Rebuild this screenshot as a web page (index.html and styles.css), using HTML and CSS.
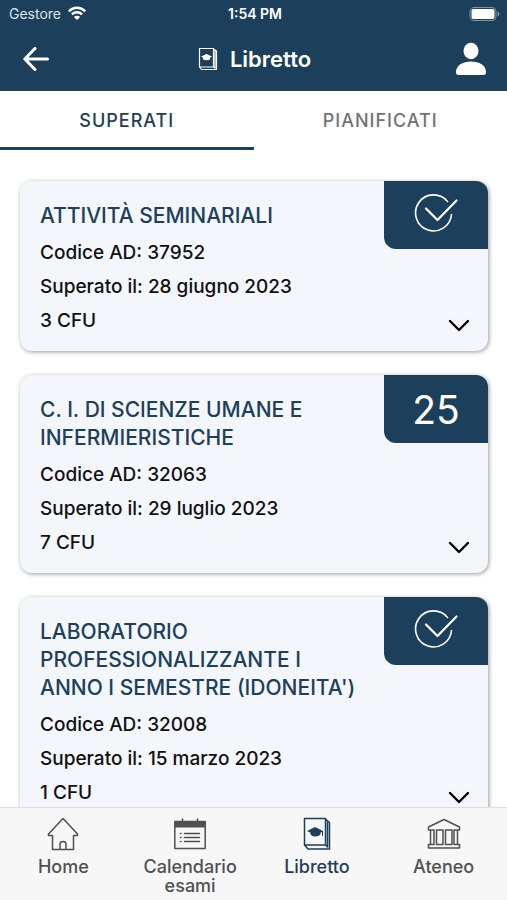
FILE: index.html
```html
<!DOCTYPE html>
<html lang="it">
<head>
<meta charset="utf-8">
<meta name="viewport" content="width=device-width, initial-scale=1">
<title>Libretto</title>
<link rel="stylesheet" href="styles.css">
</head>
<body>
<svg class="symbols" aria-hidden="true">
  <symbol id="check" viewBox="0 0 44 40">
    <path d="M33.5 8.5A18 18 0 1 0 37.5 21.500" stroke-width="1.6"/>
    <path d="M12 15.500L23.500 27L42.500 7.500" stroke-width="2.200"/>
  </symbol>
  <symbol id="chevron" viewBox="0 0 22 14">
    <path d="M2 2L11 11L20 2"/>
  </symbol>
</svg>

<header class="header">
  <div class="status">
    <div class="carrier">Gestore
      <svg class="wifi" viewBox="0 0 20 15" aria-hidden="true">
        <path d="M1.800 5.300C6.500 .6 13.500 .6 18.200 5.300M4.900 8.300C7.800 5.500 12.200 5.500 15.100 8.300"/>
        <path class="solid" d="M10 14L6.900 10.900C8.700 9.200 11.300 9.200 13.100 10.900Z"/>
      </svg>
    </div>
    <div class="clock">1:54 PM</div>
    <svg class="battery" viewBox="0 0 32 16" aria-hidden="true">
      <rect class="shell" x="1" y="1.500" width="26" height="13" rx="4"/>
      <rect class="charge" x="2.500" y="3" width="23" height="10" rx="2"/>
      <path class="tip" d="M28.500 5.500C31 6.500 31 9.500 28.500 10.500Z"/>
    </svg>
  </div>
  <div class="toolbar">
    <button class="icon-button" type="button" aria-label="Indietro">
      <svg class="back" viewBox="0 0 26 24" aria-hidden="true"><path d="M12 1.500L1.800 12L12 22.500M2.500 12H24.500"/></svg>
    </button>
    <h1 class="heading">
      <svg class="heading-icon" viewBox="0 0 20 24" aria-hidden="true">
        <path d="M1.500 1.500H15.500V20H1.500ZM1.500 20L3.500 22.500H18.500V4L15.500 2M15.500 20L17 21V4"/>
        <path class="solid" d="M3 9.500L8.500 7L14 9.500L12 10.800V12.500C10 13.500 7 13.500 5 12.500V10.800Z"/>
      </svg>
      Libretto
    </h1>
    <button class="icon-button" type="button" aria-label="Profilo">
      <svg class="profile" viewBox="0 0 30 34" aria-hidden="true">
        <ellipse cx="15" cy="9" rx="7.500" ry="8.300"/>
        <path d="M0 30C0 23.500 7 19.500 15 19.500S30 23.500 30 30C30 32.200 29.200 33 27.500 33H2.500C.8 33 0 32.200 0 30Z"/>
      </svg>
    </button>
  </div>
</header>

<div class="tabs" role="tablist">
  <button class="tab selected" type="button" role="tab" aria-selected="true">SUPERATI</button>
  <button class="tab" type="button" role="tab" aria-selected="false">PIANIFICATI</button>
</div>

<main class="list">
  <article class="card">
    <div class="details">
      <h2 class="title">ATTIVITÀ SEMINARIALI</h2>
      <p class="row">Codice AD: 37952</p>
      <p class="row">Superato il: 28 giugno 2023</p>
      <p class="row">3 CFU</p>
    </div>
    <div class="side">
      <div class="grade"><svg class="check" role="img" aria-label="Idoneo"><use href="#check"/></svg></div>
      <button class="expand" type="button" aria-label="Espandi"><svg class="chevron" aria-hidden="true"><use href="#chevron"/></svg></button>
    </div>
  </article>
  <article class="card">
    <div class="details">
      <h2 class="title">C. I. DI SCIENZE UMANE E INFERMIERISTICHE</h2>
      <p class="row">Codice AD: 32063</p>
      <p class="row">Superato il: 29 luglio 2023</p>
      <p class="row">7 CFU</p>
    </div>
    <div class="side">
      <div class="grade">25</div>
      <button class="expand" type="button" aria-label="Espandi"><svg class="chevron" aria-hidden="true"><use href="#chevron"/></svg></button>
    </div>
  </article>
  <article class="card">
    <div class="details">
      <h2 class="title">LABORATORIO PROFESSIONALIZZANTE I ANNO I SEMESTRE (IDONEITA')</h2>
      <p class="row">Codice AD: 32008</p>
      <p class="row">Superato il: 15 marzo 2023</p>
      <p class="row">1 CFU</p>
    </div>
    <div class="side">
      <div class="grade"><svg class="check" role="img" aria-label="Idoneo"><use href="#check"/></svg></div>
      <button class="expand" type="button" aria-label="Espandi"><svg class="chevron" aria-hidden="true"><use href="#chevron"/></svg></button>
    </div>
  </article>
</main>

<nav class="nav">
  <a class="nav-item" href="#home">
    <svg class="nav-icon" viewBox="0 0 34 34" aria-hidden="true">
      <path d="M17 1.500L31.500 17V18.500H27.500V32.500H6.500V18.500H2.500V17ZM14 32V27C14 23.500 20 23.500 20 27V32"/>
    </svg>
    Home
  </a>
  <a class="nav-item" href="#calendario">
    <svg class="nav-icon" viewBox="0 0 34 34" aria-hidden="true">
      <path d="M1.800 4.500H32.200V31.500H1.800ZM9.500 2V5M24.500 2V5M11.500 16.500H26.500M11.500 20.500H26.500M11.500 24.500H26.500M7.500 16.500H8M7.500 20.500H8M7.500 24.500H8"/>
      <path class="solid" d="M1.500 4H32.500V10.500H1.500Z"/>
    </svg>
    Calendario esami
  </a>
  <a class="nav-item current" href="#libretto" aria-current="page">
    <svg class="nav-icon" viewBox="0 0 34 34" aria-hidden="true">
      <path d="M4.500 1.500H25.500V28H4.500ZM4.500 28L8 32H29.500V5.500L25.500 2M25.500 28L27.500 30V5"/>
      <path class="solid" d="M7 14L15 10L23 14V19H22V15L20.500 15.800V17.500C18 20 12.500 20 10.500 17.500V15.800Z"/>
    </svg>
    Libretto
  </a>
  <a class="nav-item" href="#ateneo">
    <svg class="nav-icon" viewBox="0 0 34 34" aria-hidden="true">
      <path d="M17 2.500L32.500 10V13H30.500V27.500H32.500V31H1.500V27.500H3.500V13H1.500V10ZM3.500 13H7V27.500H3.500M27 13H30.500M27 13V27.500H30.500M9.500 13H16V27.500H9.500ZM18.500 13H25V27.500H18.500Z"/>
    </svg>
    Ateneo
  </a>
</nav>
</body>
</html>
```

FILE: styles.css
```css
:root {
  --navy: #1c405b;
  --panel: #f3f6fa;
  --grey: #505050;
}

* {
  box-sizing: border-box;
}

body {
  display: flex;
  flex-direction: column;
  height: 100vh;
  margin: 0;
  overflow: hidden;
  background: #fff;
  color: #111;
  font-family: Inter, "Liberation Sans", sans-serif;
}

button {
  padding: 0;
  border: 0;
  background: none;
  color: inherit;
  font: inherit;
  cursor: pointer;
}

svg {
  flex: none;
  fill: none;
  stroke: currentColor;
  stroke-linecap: round;
  stroke-linejoin: round;
}

svg .solid {
  fill: currentColor;
  stroke: none;
}

.symbols {
  position: absolute;
  width: 0;
  height: 0;
}

.header {
  flex: none;
  background: var(--navy);
  color: #fff;
}

.status {
  display: grid;
  grid-template-columns: 1fr auto 1fr;
  align-items: center;
  height: 27px;
  padding: 0 6px 0 9px;
  font-size: 14px;
}

.carrier {
  display: flex;
  align-items: center;
  gap: 6px;
  color: #dde5eb;
}

.clock {
  font-weight: 600;
}

.wifi {
  width: 20px;
  height: 15px;
  stroke: #fff;
  stroke-width: 2.4;
  stroke-linecap: butt;
}

.wifi .solid {
  fill: #fff;
}

.battery {
  justify-self: end;
  width: 32px;
  height: 16px;
}

.shell {
  stroke: #8296a5;
}

.charge {
  fill: #fff;
  stroke: none;
}

.tip {
  fill: #8296a5;
  stroke: none;
}

.toolbar {
  display: grid;
  grid-template-columns: 1fr auto 1fr;
  align-items: center;
  height: 64px;
  padding: 0 21px 0 23px;
}

.icon-button {
  display: flex;
  justify-self: start;
}

.icon-button:last-child {
  justify-self: end;
}

.back {
  width: 26px;
  height: 24px;
  stroke-width: 3;
}

.profile {
  width: 30px;
  height: 34px;
  fill: #fff;
  stroke: none;
}

.heading {
  display: flex;
  align-items: center;
  gap: 12px;
  margin: 0;
  font-size: 22px;
  font-weight: 600;
  line-height: 24px;
}

.heading-icon {
  width: 20px;
  height: 24px;
  stroke-width: 1.2;
}

.tabs {
  display: flex;
  flex: none;
  height: 59px;
}

.tab {
  flex: 1;
  padding-top: 3px;
  border-bottom: 3px solid transparent;
  color: #737373;
  font-size: 18px;
  font-weight: 500;
  letter-spacing: 1px;
}

.tab.selected {
  border-color: var(--navy);
  color: var(--navy);
}

.list {
  display: flex;
  flex: 1;
  flex-direction: column;
  gap: 24px;
  min-height: 0;
  padding: 31px 19px 0 20px;
  overflow: hidden;
}

.card {
  display: flex;
  flex: none;
  border-radius: 12px;
  background: var(--panel);
  box-shadow: 1px 1px 4px rgba(0, 0, 0, 0.4);
}

.details {
  flex: 1;
  padding: 21px 20px 13px;
}

.title {
  margin: 0 0 6px;
  color: var(--navy);
  font-size: 21px;
  font-weight: 500;
  line-height: 28px;
}

.row {
  margin: 0;
  font-size: 19px;
  font-weight: 500;
  line-height: 34px;
}

.side {
  display: flex;
  flex: none;
  flex-direction: column;
  justify-content: space-between;
  width: 104px;
}

.grade {
  display: flex;
  align-items: center;
  justify-content: center;
  height: 68px;
  border-radius: 0 12px 0 12px;
  background: var(--navy);
  color: #fff;
  font-size: 39px;
}

.check {
  width: 44px;
  height: 40px;
  margin-bottom: 4px;
}

.expand {
  display: flex;
  align-self: flex-end;
  padding: 18px;
}

.chevron {
  width: 22px;
  height: 14px;
  stroke: #000;
  stroke-width: 2.4;
}

.nav {
  display: grid;
  flex: none;
  grid-template-columns: repeat(4, 1fr);
  height: 93px;
  padding-top: 9px;
  border-top: 1px solid #dedfe0;
  background: #f7f7f7;
}

.nav-item {
  display: flex;
  flex-direction: column;
  align-items: center;
  gap: 6px;
  padding: 0 12px;
  color: var(--grey);
  font-size: 18px;
  font-weight: 500;
  line-height: 19px;
  text-align: center;
  text-decoration: none;
}

.nav-item.current {
  color: var(--navy);
}

.nav-icon {
  width: 34px;
  height: 34px;
  stroke-width: 1.5;
}
```
